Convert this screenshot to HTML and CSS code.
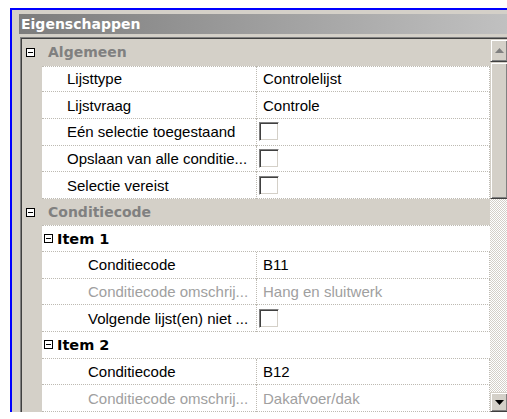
FILE: index.html
```html
<!DOCTYPE html>
<html lang="nl">
<head>
<meta charset="utf-8">
<title>Eigenschappen</title>
<link rel="stylesheet" href="styles.css">
</head>
<body>
<div class="frame">
  <div class="panel">
    <div class="titlebar">
      <span class="title">Eigenschappen</span>
      <span class="close">
        <svg width="8" height="7" viewBox="0 0 8 7"><path d="M1 0l3 2.5L7 0h1L4.6 3.5 8 7H7L4 4.5 1 7H0l3.4-3.5L0 0z" fill="#000"/></svg>
      </span>
    </div>
    <div class="grid">
      <div class="grid-inner">
        <div class="rows">
          <div class="row cat">
            <svg class="tog" width="9" height="9" viewBox="0 0 9 9"><rect x=".5" y=".5" width="8" height="8" fill="#fff" stroke="#000"/><path d="M2 4.5h5" stroke="#000"/></svg>
            <span class="cat-label">Algemeen</span>
          </div>
          <div class="row prop first">
            <span class="gut"></span><span class="name l1">Lijsttype</span><span class="value">Controlelijst</span>
          </div>
          <div class="row prop">
            <span class="gut"></span><span class="name l1">Lijstvraag</span><span class="value">Controle</span>
          </div>
          <div class="row prop">
            <span class="gut"></span><span class="name l1">Eén selectie toegestaand</span><span class="value"><span class="check"></span></span>
          </div>
          <div class="row prop">
            <span class="gut"></span><span class="name l1">Opslaan van alle conditie...</span><span class="value"><span class="check"></span></span>
          </div>
          <div class="row prop">
            <span class="gut"></span><span class="name l1">Selectie vereist</span><span class="value"><span class="check"></span></span>
          </div>
          <div class="row cat">
            <svg class="tog" width="9" height="9" viewBox="0 0 9 9"><rect x=".5" y=".5" width="8" height="8" fill="#fff" stroke="#000"/><path d="M2 4.5h5" stroke="#000"/></svg>
            <span class="cat-label">Conditiecode</span>
          </div>
          <div class="row item first">
            <span class="gut"></span>
            <span class="item-cell">
              <svg class="tog" width="9" height="9" viewBox="0 0 9 9"><rect x=".5" y=".5" width="8" height="8" fill="#fff" stroke="#000"/><path d="M2 4.5h5" stroke="#000"/></svg>
              <span class="item-label">Item 1</span>
            </span>
          </div>
          <div class="row prop">
            <span class="gut"></span><span class="name l2">Conditiecode</span><span class="value">B11</span>
          </div>
          <div class="row prop ro">
            <span class="gut"></span><span class="name l2">Conditiecode omschrij...</span><span class="value">Hang en sluitwerk</span>
          </div>
          <div class="row prop">
            <span class="gut"></span><span class="name l2">Volgende lijst(en) niet ...</span><span class="value"><span class="check"></span></span>
          </div>
          <div class="row item">
            <span class="gut"></span>
            <span class="item-cell">
              <svg class="tog" width="9" height="9" viewBox="0 0 9 9"><rect x=".5" y=".5" width="8" height="8" fill="#fff" stroke="#000"/><path d="M2 4.5h5" stroke="#000"/></svg>
              <span class="item-label">Item 2</span>
            </span>
          </div>
          <div class="row prop">
            <span class="gut"></span><span class="name l2">Conditiecode</span><span class="value">B12</span>
          </div>
          <div class="row prop ro">
            <span class="gut"></span><span class="name l2">Conditiecode omschrij...</span><span class="value">Dakafvoer/dak</span>
          </div>
        </div>
        <div class="vscroll">
          <div class="sb-btn up">
            <svg width="9" height="5" viewBox="0 0 9 5"><path d="M4.5 0L9 5H0z" fill="#808080"/></svg>
          </div>
          <div class="sb-thumb"></div>
          <div class="sb-track"></div>
          <div class="sb-btn down">
            <svg width="9" height="5" viewBox="0 0 9 5"><path d="M0 0h9L4.5 5z" fill="#000"/></svg>
          </div>
        </div>
      </div>
    </div>
  </div>
</div>
</body>
</html>
```
FILE: styles.css
```css
html, body {
  margin: 0;
  padding: 0;
  background: #fff;
}

body {
  width: 507px;
  height: 419px;
  overflow: hidden;
  font-family: "Liberation Sans", Arial, sans-serif;
  font-size: 15px;
  color: #000;
}

/* selection outline around the docked window */
.frame {
  margin: 8px 0 0 10px;
  width: 520px;
  height: 402px;
  border-left: 2px solid #0000ff;
  border-top: 2px solid #0000ff;
  overflow: hidden;
}

.panel {
  height: 100%;
  box-sizing: border-box;
  padding: 4px 0 0 7px;
  background: #d4d0c8;
}

.titlebar {
  height: 20px;
  display: flex;
  align-items: center;
  justify-content: space-between;
  background: linear-gradient(to right, #7c7c7c, #c4c4c4);
  margin-bottom: 3px;
}

.title {
  padding-left: 2px;
  font-family: "DejaVu Sans", Tahoma, sans-serif;
  font-weight: bold;
  font-size: 14px;
  color: #fff;
}

.close {
  width: 16px;
  height: 14px;
  margin-right: 3px;
  box-sizing: border-box;
  background: #d4d0c8;
  border: 1px solid;
  border-color: #fff #404040 #404040 #fff;
  display: flex;
  align-items: center;
  justify-content: center;
}

.close svg {
  display: block;
}

/* sunken property grid */
.grid {
  margin-left: 1px;
  border: 1px solid;
  border-color: #808080 #fff #fff #808080;
}

.grid-inner {
  display: flex;
  border: 1px solid;
  border-color: #404040 #d4d0c8 #d4d0c8 #404040;
}

.rows {
  width: 468px;
  height: 373px;
  display: grid;
  grid-template-rows: repeat(14, 1fr);
  background: #d4d0c8;
}

.row {
  display: grid;
  grid-template-columns: 20px 214px 1fr;
  min-height: 0;
}

.gut {
  background: #d4d0c8;
}

.prop .name,
.prop .value,
.item-cell {
  background: #fff;
  border-bottom: 1px dotted #bdbab2;
  box-sizing: border-box;
  display: flex;
  align-items: center;
  white-space: nowrap;
  overflow: hidden;
}

.first .name,
.first .value,
.first .item-cell {
  border-top: 1px dotted #bdbab2;
}

.name.l1 {
  padding-left: 25px;
}

.name.l2 {
  padding-left: 46px;
}

.value {
  border-left: 1px dotted #bdbab2;
  border-right: 1px dotted #bdbab2;
  padding-left: 6px;
}

.ro .name,
.ro .value {
  color: #a0a0a0;
}

/* category header */
.cat {
  display: flex;
  align-items: center;
  padding-left: 4px;
}

.cat-label {
  margin-left: 13px;
  font-family: "DejaVu Sans", Tahoma, sans-serif;
  font-weight: bold;
  font-size: 14px;
  color: #808080;
}

.tog {
  display: block;
  flex: none;
}

/* expandable item row */
.item-cell {
  grid-column: 2 / 4;
  padding-left: 2px;
}

.item-label {
  margin-left: 4px;
  font-family: "DejaVu Sans", Tahoma, sans-serif;
  font-weight: bold;
  font-size: 14.5px;
}

/* classic sunken checkbox */
.check {
  display: block;
  width: 20px;
  height: 19px;
  margin-left: -4px;
  box-sizing: border-box;
  background: #fff;
  border: 1px solid;
  border-color: #808080 #fff #fff #808080;
  box-shadow: inset 1px 1px 0 #404040, inset -1px -1px 0 #d4d0c8;
}

/* vertical scrollbar */
.vscroll {
  width: 18px;
  height: 373px;
  display: flex;
  flex-direction: column;
}

.sb-btn,
.sb-thumb {
  box-sizing: border-box;
  background: #d4d0c8;
  border: 1px solid;
  border-color: #d4d0c8 #404040 #404040 #d4d0c8;
  box-shadow: inset 1px 1px 0 #fff, inset -1px -1px 0 #808080;
}

.sb-btn {
  display: flex;
  align-items: center;
  justify-content: center;
}

.sb-btn svg {
  display: block;
}

.up {
  height: 23px;
}

.sb-thumb {
  height: 137px;
}

.sb-track {
  flex: 1;
  background: repeating-conic-gradient(#d4d0c8 0 25%, #fff 0 50%) 0 0 / 2px 2px;
}

.down {
  height: 20px;
}
```
